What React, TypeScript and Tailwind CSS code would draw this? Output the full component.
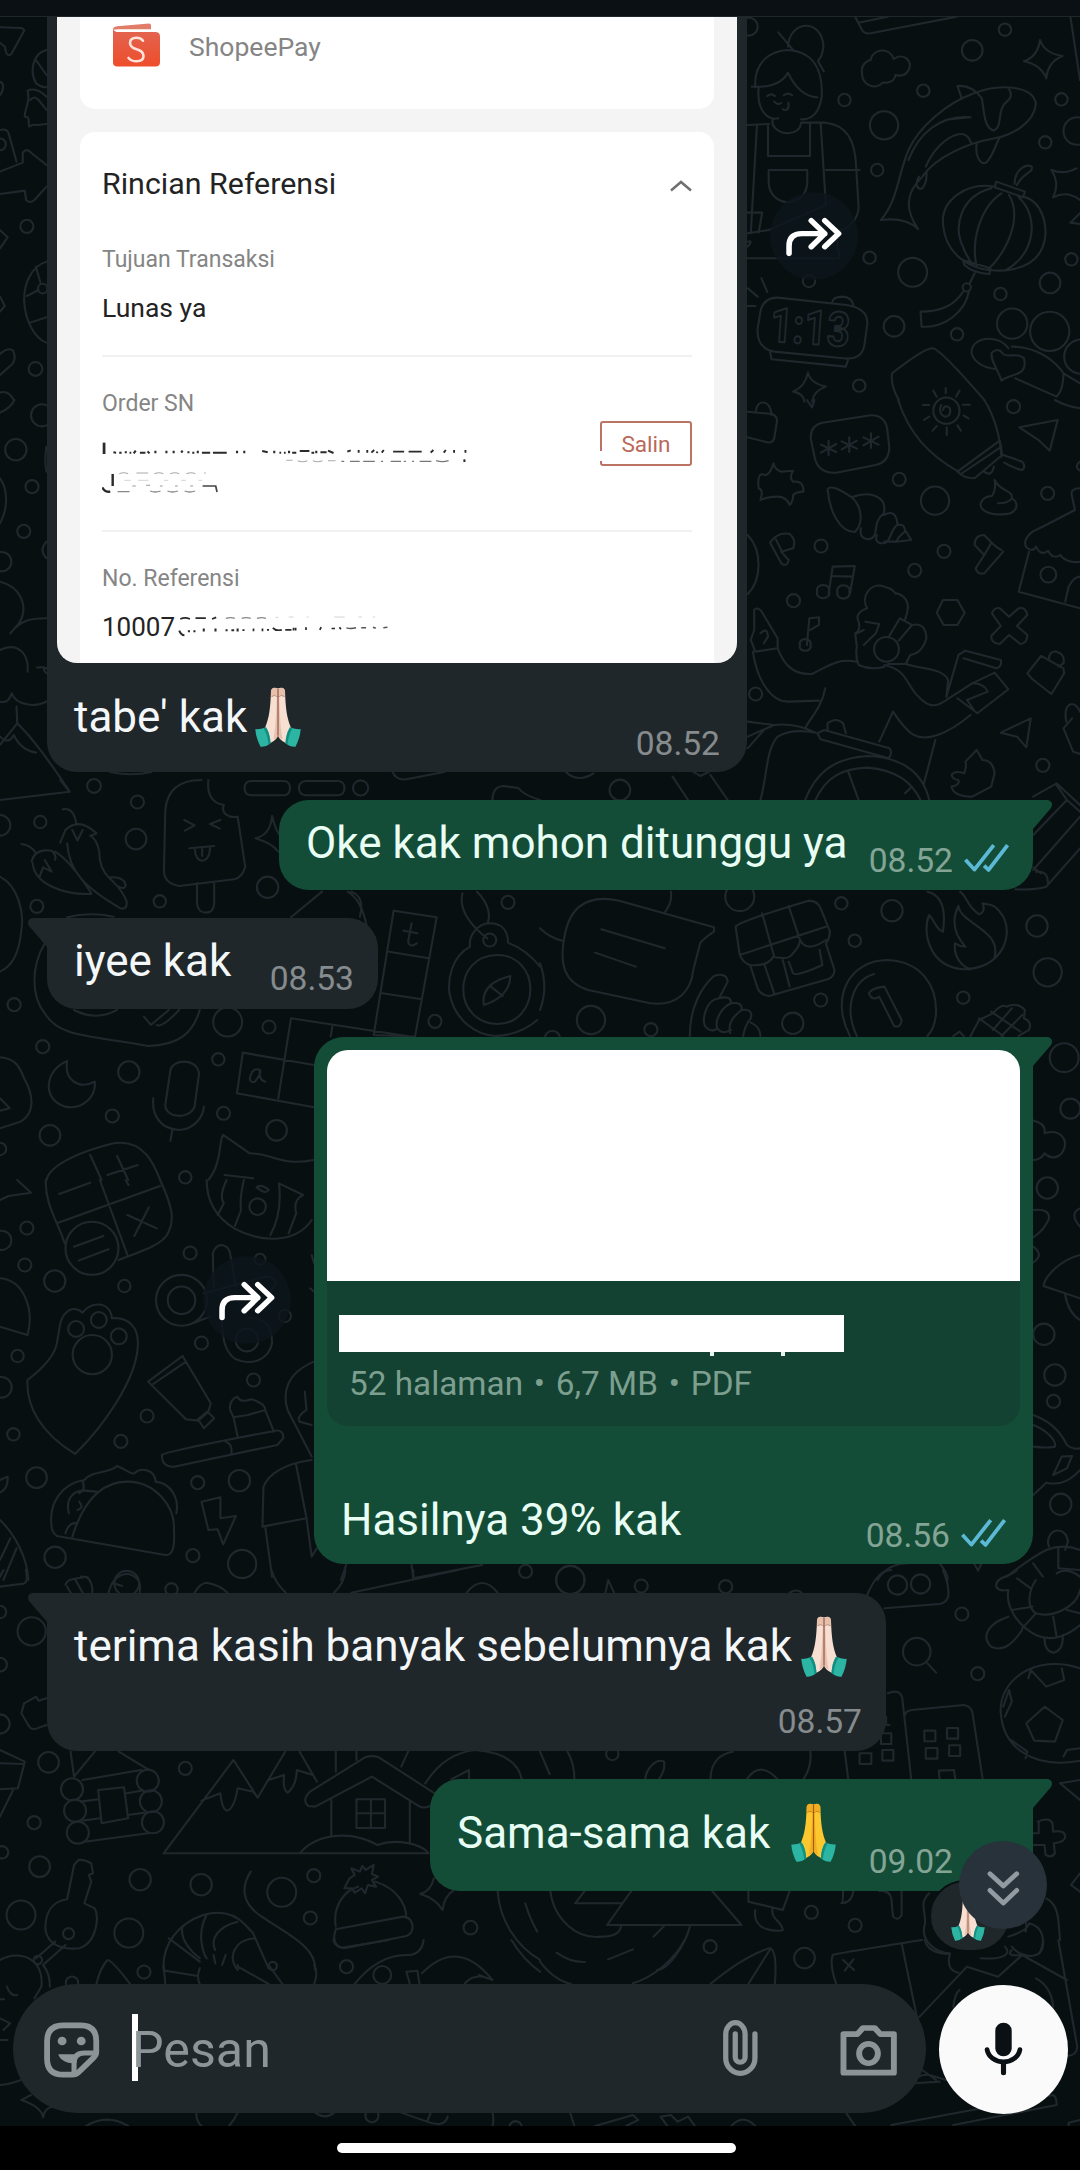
import type { ReactNode } from "react";

type Dot = [number, number, number];

interface Tile {
  x: number;
  y: number;
  dots: Dot[];
  d: string;
}

/* Each tile of the wallpaper is drawn in its own grid and scaled onto the page. */
const tiles: Tile[] = [
  {
    x: 0,
    y: 0,
    dots: [
      [78, 679, 19],
      [103, 1107, 20],
      [124, 866, 14],
      [0, 433, 17],
    ],
    d: "M0 82 L62 84 Q74 88 68 96 L34 160 Q24 172 18 158 L14 140 L0 128 M135 150 C95 160 85 215 105 250 Q120 262 135 262 M103 178 L135 225 M80 272 C90 310 70 325 72 350 C90 350 80 370 85 380 Q95 372 110 375 L135 372 M80 272 Q105 260 135 290 M88 300 Q100 285 112 300 T135 330 M0 245 Q14 250 6 275 L0 285 M0 390 Q20 385 25 400 L48 485 M0 515 L66 488 L66 458 Q78 442 92 460 L135 495 M0 582 L72 572 L76 600 Q85 612 100 600 L135 560 M0 690 L22 712 L0 745 M0 890 L14 918 L0 935 M135 785 C90 800 70 850 70 900 C72 960 100 1015 135 1028 M78 888 L112 870 M88 968 L135 952 M104 800 L118 850 M0 1062 Q25 1040 38 1052 Q48 1075 36 1092 L0 1125 M0 1178 Q24 1170 40 1200",
  },
  {
    x: 540,
    y: 0,
    dots: [
      [884, 300, 18], [1113, 272, 18], [1255, 151, 30], [1350, 89, 18], [999, 376, 41], [979, 510, 18],
      [1514, 298, 18], [1467, 427, 18], [1560, 393, 40], [957, 773, 18], [1082, 817, 42], [781, 843, 18],
      [1481, 849, 30], [1543, 778, 18], [1337, 882, 18], [1211, 1003, 18], [1028, 979, 30], [1371, 971, 44],
      [1480, 994, 57], [1572, 1070, 50], [927, 1157, 18], [1239, 862, 12], [606, 80, 26],
    ],
    d: "M720 140 C725 60 815 55 823 135 Q822 165 808 182 M692 97 L735 150 M625 262 C620 190 665 152 722 150 C790 155 822 205 818 290 C812 330 795 360 758 358 M635 262 C628 330 660 362 692 355 M615 260 C680 264 708 240 720 218 C740 262 770 290 805 292 M808 185 L824 214 M675 358 V372 C690 410 755 410 758 368 M662 375 V468 H784 V370 M664 510 H776 V550 C770 625 670 625 664 550Z M630 375 L612 700 M815 370 L830 615 L665 690 M603 375 L665 372 M760 368 H830 C890 375 915 420 918 500 L925 620 C925 660 890 690 870 690 M830 510 H928 M603 775 H870 L862 720 M603 638 H645 L635 698 M603 700 L665 690 M603 740 Q620 720 603 725 M660 288 q12 -10 22 0 M708 286 q12 -10 24 0 M680 305 q10 12 20 4 M705 328 q20 8 16 -20 M935 220 C930 190 955 180 960 180 C965 145 1015 140 1027 177 C1055 155 1085 185 1070 210 C1060 230 1040 228 1032 225 C1030 245 1010 250 995 248 C975 270 935 258 935 220Z M915 50 L935 90 Q942 102 960 100 L1210 50 M925 68 L1010 50 M1452 120 Q1465 160 1517 168 Q1475 185 1470 235 Q1455 195 1405 184 Q1445 170 1452 120Z M990 660 C1040 600 1040 520 1070 450 C1100 380 1180 310 1260 280 C1330 250 1430 255 1440 310 C1435 370 1370 405 1320 415 C1240 430 1150 470 1110 530 C1060 580 1060 630 1098 687 C1070 660 1030 655 990 660Z M1225 296 L1212 258 C1240 255 1265 270 1283 295 C1290 340 1290 385 1318 392 C1345 380 1325 330 1355 305 Q1375 290 1362 268 M1070 480 C1100 400 1160 345 1250 352 L1190 358 M1268 432 C1262 470 1280 495 1295 488 C1315 470 1320 440 1335 412 M1120 500 C1150 430 1200 400 1225 402 Q1245 405 1252 430 M1100 530 C1085 560 1100 570 1110 565 Q1125 545 1122 515 M1320 560 C1240 545 1165 600 1170 670 C1175 740 1215 780 1262 800 C1310 820 1460 830 1468 700 C1468 640 1440 595 1400 590 M1310 565 C1220 590 1200 680 1228 740 Q1240 775 1262 800 M1340 580 C1280 620 1250 720 1268 800 M1362 585 C1400 650 1360 750 1300 810 M1390 592 C1450 650 1440 760 1350 812 M1325 545 L1408 575 L1403 592 L1320 562Z M1378 552 C1378 510 1410 490 1428 500 C1432 520 1405 515 1385 555 M1228 780 L1308 805 L1305 822 Q1260 820 1232 795Z M1262 820 L1248 850 M1228 876 C1200 920 1160 935 1105 935 L1108 980 C1180 985 1235 930 1245 876 M1568 600 Q1530 570 1490 592 Q1510 550 1485 510 Q1520 525 1558 505 M1568 640 L1540 668 L1568 672 M690 893 L890 915 Q955 925 950 975 L942 1035 Q935 1082 880 1075 L680 1055 Q628 1045 632 985 L640 935 Q648 892 690 893Z M668 1055 L672 1078 L888 1100 L895 1078 M848 908 Q850 890 880 890 Q905 893 910 915 M603 865 L632 890 M643 835 L660 876 M603 918 H625 M778 1118 Q785 1150 830 1160 Q795 1172 790 1205 M778 1118 Q770 1160 735 1175 Q765 1180 768 1205 M1140 1045 Q1118 1043 1022 1120 Q1018 1160 1042 1200 M1140 1045 Q1160 1045 1290 1200 M1178 1164 V1180 M1142 1172 L1152 1190 M1218 1172 L1208 1190 M1345 1062 C1360 1075 1385 1055 1405 1075 C1420 1130 1365 1120 1340 1142 C1330 1110 1305 1075 1312 1058 Q1330 1040 1345 1062Z M1360 1045 C1330 1000 1250 1010 1253 1060 Q1265 1100 1325 1108 M1370 1040 C1450 1040 1500 1090 1520 1120 Q1520 1170 1500 1190 L1380 1135 M1520 1120 L1568 1150 M1540 50 L1568 240",
  },
  {
    x: 0,
    y: 400,
    dots: [
      [122, 46, 32], [46, 149, 31], [93, 260, 19], [69, 394, 19], [5, 485, 28], [273, 1158, 20], [1047, 1164, 22],
    ],
    d: "M0 38 Q30 25 42 0 M135 140 Q128 180 135 215 M0 235 C25 270 22 330 0 370 M135 425 Q112 450 135 475 M0 545 C60 560 85 620 55 670 L30 700 C60 660 90 655 135 655 M0 750 C50 725 85 760 80 815 M108 803 Q125 800 135 805 M135 805 Q120 805 135 820 M0 905 Q25 912 34 880 C48 918 105 922 135 905 M48 920 L50 970 L0 1035 M50 970 Q110 1030 202 1175 M0 1010 Q25 1035 40 1005 Q60 1050 105 1058 M320 1116 Q380 1130 440 1116 M728 1143 H825 Q842 1145 842 1164 Q842 1184 825 1186 H728 Q710 1184 710 1164 Q710 1145 728 1143Z M888 1143 H982 Q1000 1145 1000 1164 Q1000 1184 982 1186 H888 Q868 1184 868 1164 Q868 1145 888 1143Z M1140 1116 Q1150 1142 1180 1138 L1290 1116",
  },
  {
    x: 540,
    y: 400,
    dots: [
      [1375, 20, 19], [1043, 238, 19], [1147, 302, 41], [1474, 280, 19], [816, 438, 19], [1173, 454, 19],
      [1088, 511, 19], [736, 602, 19], [1476, 524, 23], [626, 882, 19], [1460, 1096, 19], [232, 1170, 30], [1180, 32, 38], [1006, 748, 36],
    ],
    d: "M627 32 C630 -5 672 0 672 45 M603 35 L675 42 Q690 50 688 65 L680 115 Q675 130 660 127 L603 112 M775 0 L790 22 L797 0 M820 68 L960 46 Q1000 45 1008 85 L1014 140 Q1015 185 975 195 L860 218 Q810 222 798 175 L786 115 Q785 75 820 68Z M838 122 V166 M816 134 L860 156 M860 132 L816 158 M898 112 V156 M876 124 L920 146 M920 122 L876 148 M961 100 V144 M939 112 L983 134 M983 110 L939 136 M1112 15 h18 M1115 60 L1130 50 M1140 92 L1152 78 M1181 105 V82 M1222 92 L1212 76 M1244 55 L1230 46 M1248 14 h-20 M1170 30 Q1175 10 1190 25 Q1195 50 1175 50 Q1155 40 1165 15 M1040 0 C1070 100 1130 165 1215 215 M1290 0 C1320 50 1335 100 1340 170 M1212 215 L1335 122 L1342 165 L1262 235 Q1230 235 1212 215Z M1222 222 L1340 140 M1290 215 Q1310 232 1318 200 M1345 165 L1400 185 Q1412 200 1400 210 Q1375 205 1348 188 M1392 82 L1503 60 L1480 152 L1450 122Z M1495 0 Q1530 20 1568 25 M1568 185 Q1550 200 1568 212 M678 190 Q682 210 700 215 L735 212 Q722 232 735 245 Q765 240 765 275 Q745 275 735 285 Q735 305 725 315 Q715 290 690 290 Q660 290 640 300 Q650 270 635 265 Q630 225 645 222 Q665 235 678 190Z M835 268 Q845 250 905 292 C935 320 940 370 915 395 C870 400 840 330 835 268Z M905 292 C960 270 1010 290 998 340 C960 370 990 410 955 418 Q925 415 932 385 M998 345 Q1035 325 1038 375 C1015 390 1020 430 995 430 Q970 430 978 405 M1038 375 Q1060 370 1060 395 Q1040 410 1035 425 H1000 M1060 390 L1078 420 L1035 425 M1320 240 C1335 275 1375 270 1370 295 Q1360 310 1330 310 M1370 295 C1395 310 1385 345 1340 343 C1300 345 1265 325 1285 300 Q1295 288 1312 288 Q1325 270 1320 240 M1568 265 Q1545 265 1543 280 L1553 330 Q1480 370 1430 395 Q1400 420 1412 442 Q1430 458 1440 440 Q1455 470 1475 452 Q1490 480 1510 465 Q1530 492 1568 485 M1420 455 L1390 575 L1568 625 M1525 605 L1535 560 Q1550 530 1568 530 M603 405 C645 450 645 540 603 582 M668 428 Q690 395 725 402 Q745 420 735 445 L700 455 L722 480 Q720 500 702 492 L668 428 M685 418 L705 460 M1340 450 Q1325 445 1290 405 Q1262 405 1262 435 L1290 465 L1265 505 Q1270 525 1290 520 L1345 455 M1310 430 L1290 465 M838 580 L850 500 L914 498 L900 580 M848 528 L908 530 M805 575 a18 15 0 1 0 34 0 a18 15 0 1 0 -34 0 M864 576 a18 15 0 1 0 34 0 a18 15 0 1 0 -34 0 M775 735 L782 655 L810 652 V675 L785 690 M755 735 a16 13 0 1 0 30 0 a16 13 0 1 0 -30 0 M1170 600 H1212 L1233 638 L1212 675 H1172 L1152 638Z M1312 640 Q1320 620 1335 625 L1362 650 L1390 625 Q1410 620 1415 645 L1385 678 L1415 705 Q1415 730 1395 732 L1362 705 L1335 732 Q1310 730 1310 708 L1338 678Z M950 625 C930 590 960 545 1000 560 C1040 570 1025 585 1035 580 C1070 590 1075 620 1060 658 M950 625 Q920 635 922 655 Q935 690 915 700 L920 740 Q915 770 925 795 Q960 812 1000 800 M945 665 L985 672 L975 700 L940 735 M920 700 L940 690 M1012 712 L1045 655 L1080 675 L1042 722 M1080 675 Q1120 665 1122 715 Q1110 760 1075 765 L1062 792 H1010 M622 630 Q630 620 642 632 L690 715 L690 745 L625 755 L612 720 L622 690 Z M640 700 Q660 680 662 710 L650 730 M690 745 C710 800 740 825 790 822 C850 790 870 775 920 785 M618 755 C630 840 670 905 720 905 L810 902 M828 865 C820 920 780 960 770 985 M1000 795 C1060 810 1060 840 1090 880 C1120 915 1140 930 1180 900 L1255 850 Q1290 850 1300 875 L1240 900 L1260 930 M1062 792 C1120 810 1170 805 1185 840 L1180 890 L1215 765 L1235 752 L1338 780 Q1342 800 1325 805 L1230 775 M1255 850 L1320 818 L1360 868 L1270 940 L1212 895 M1250 945 C1180 1005 1120 1025 1085 1005 Q1060 990 1025 935 L985 1025 M1148 1020 L1115 1150 M1430 838 L1415 820 L1455 768 L1520 805 L1522 820 L1485 882Z M1478 775 Q1480 752 1500 755 Q1525 762 1520 790 L1505 800 M1338 998 L1425 955 L1412 1042 L1385 1010Z M1568 1062 L1548 1055 L1520 985 L1545 955 M1528 965 Q1520 915 1545 912 Q1560 915 1568 935 M805 1000 L825 990 L1015 1045 Q1025 1060 1012 1075 L815 1018Z M835 990 V970 Q860 950 880 970 L888 1000 M603 965 L680 975 Q740 968 800 998 M603 1010 L680 975 M640 1200 C660 1130 655 1050 690 1010 Q730 985 800 998 M603 1045 L650 990 M770 1200 C800 1120 850 1075 950 1068 C1040 1070 1110 1110 1130 1200 M800 1200 C830 1130 880 1105 950 1103 C1040 1110 1080 1150 1105 1200 M895 1115 L925 1200 M1060 1180 L1075 1165 M1195 1125 Q1205 1110 1232 1120 Q1240 1095 1235 1085 L1268 1050 L1285 1080 Q1315 1080 1320 1120 L1310 1160 L1255 1190 Q1200 1190 1195 1160 Q1220 1155 1215 1140 Q1200 1140 1195 1125Z M75 1116 Q110 1150 155 1120 M385 1130 L430 1200 M495 1125 L545 1200 M445 1116 L465 1128 L490 1116",
  },
  {
    x: 0,
    y: 780,
    dots: [
      [117, 126, 18], [399, 66, 19], [395, 177, 30], [0, 136, 30], [464, 364, 18], [107, 379, 19], [777, 322, 31],
      [41, 674, 19], [124, 800, 19], [661, 726, 42], [781, 741, 19], [634, 838, 18], [374, 876, 31], [326, 1008, 19],
      [145, 1066, 30], [649, 1000, 19], [803, 1051, 30], [538, 1192, 18], [1475, 367, 19], [1263, 724, 19], [1422, 480, 19], [0, 1107, 18],
    ],
    d: "M480 90 C485 30 520 0 585 0 M605 0 C600 50 620 70 650 75 C640 100 665 115 690 110 L712 260 Q705 290 680 298 L520 318 Q475 310 476 270 L480 90 M535 120 L565 136 L537 152 M640 120 L610 132 L638 146 M550 205 L622 198 M566 205 C565 255 610 255 610 202 M587 205 V228 M572 310 V370 Q575 398 598 398 Q620 398 622 370 V306 M182 88 Q215 80 222 135 M175 188 L190 150 Q230 110 280 160 L262 168 M210 150 L225 182 L240 150 M195 190 C200 270 240 320 350 385 Q370 390 368 365 C345 300 300 300 290 240 Q290 190 265 168 M322 292 Q360 290 365 315 Q362 330 345 320 M62 192 Q90 195 105 220 M92 245 Q100 205 150 212 Q165 225 160 240 M115 290 L125 262 L150 275 L130 240 M95 250 C100 310 180 345 265 342 M160 215 C200 240 240 300 265 340 M790 108 Q800 150 812 165 M790 108 Q785 165 742 175 Q790 190 808 215 M0 290 C55 320 70 400 62 450 C55 530 30 560 0 575 M195 412 Q260 395 330 410 M130 490 C90 560 90 650 130 700 C170 770 250 765 430 798 C520 795 560 760 580 690 M215 690 Q280 725 340 690 M418 710 L438 735 L490 690 M455 735 Q470 745 520 690 M845 412 L935 335 M1010 335 Q1050 360 1065 440 M1045 410 Q1060 350 1020 335 M1143 392 L1268 412 L1205 770 L1085 765 Z M1130 515 L1245 535 M1110 640 L1225 658 M1195 430 L1185 485 Q1190 505 1210 490 M1172 452 L1212 460 M845 715 L1205 772 M845 715 L808 955 M965 740 L960 770 M705 818 L912 855 M705 818 L688 940 L912 982 M195 843 C130 870 120 960 190 980 C240 990 280 950 275 905 C230 930 185 900 195 843Z M495 870 C500 840 570 830 578 880 L565 980 C550 1020 480 1015 480 975Z M445 955 C440 1010 470 1048 520 1050 C565 1048 590 1010 592 980 M500 1050 L495 1083 M1343 340 C1330 390 1370 440 1415 475 M1385 335 C1420 370 1425 410 1415 430 M1365 500 C1360 470 1385 430 1422 430 C1460 430 1475 455 1475 488 Q1530 510 1568 560 M1365 500 C1310 530 1300 600 1305 640 C1320 720 1380 765 1440 768 Q1510 765 1560 720 M1445 525 C1375 525 1345 580 1345 628 C1345 690 1390 732 1445 732 C1505 732 1540 680 1540 628 C1540 570 1500 525 1445 525Z M1405 675 Q1395 610 1482 588 Q1480 650 1405 675Z M1425 620 L1460 648 M0 832 C50 835 60 870 70 895 C100 950 100 1000 60 1025 L0 1045 M0 955 L28 985 L0 992 M135 1200 C145 1150 250 1110 330 1090 C420 1075 450 1160 465 1200 M262 1125 L295 1200 M340 1128 L372 1200 M312 1185 L400 1155 M605 1200 C645 1150 635 1080 648 1065 L725 1120 C790 1120 820 1160 910 1140 M652 1185 L735 1195 M728 885 Q720 910 740 905 Q760 880 755 870 Q735 862 728 885 M755 870 Q750 900 770 905 M0 60 L202 35 L175 0 M1430 60 Q1430 20 1462 18 L1505 24 Q1520 45 1568 60",
  },
  {
    x: 540,
    y: 780,
    dots: [
      [580, 350, 42], [875, 370, 18], [1022, 392, 31], [914, 482, 18], [1443, 438, 31], [1474, 577, 41],
      [815, 660, 19], [734, 730, 31], [1229, 653, 18], [148, 720, 41], [322, 749, 19], [1522, 833, 42], [1540, 986, 29], [36, 775, 22],
    ],
    d: "M505 442 L230 362 C130 340 90 390 75 450 C50 560 75 610 140 630 L320 670 C400 680 440 630 445 570 L465 490 Q470 480 505 455Z M178 448 L362 505 M160 518 L278 560 M380 335 Q385 370 360 400 M0 445 Q30 475 65 482 M0 550 Q25 620 0 690 M435 768 C435 680 470 620 505 588 Q540 575 545 605 L520 655 C480 660 470 720 480 740 Q500 760 515 745 M520 655 Q555 645 555 670 C530 680 505 720 515 745 Q530 765 555 750 M555 670 Q590 665 585 690 C560 710 545 730 552 760 M585 690 Q620 685 612 715 Q595 735 590 768 M612 728 Q640 740 640 768 M568 440 Q575 425 780 362 Q805 362 815 385 L842 455 Q840 480 830 490 L855 570 Q855 590 835 598 L665 648 Q640 645 632 625 L610 555 Q590 550 580 525Z M645 400 L680 530 M722 378 L755 480 M580 525 L830 440 M610 555 Q660 560 678 530 Q720 540 730 525 Q755 500 755 480 Q775 520 830 480 M652 555 L680 640 M705 540 L725 620 M722 545 L735 580 Q745 590 820 555 L812 510 M900 768 C840 650 900 540 1010 540 C1110 545 1150 620 1150 690 Q1150 740 1125 768 M920 768 C880 680 910 600 970 582 M955 640 Q960 625 1000 620 L1050 720 Q1048 745 1028 738 L985 650 Q965 665 955 640Z M1125 335 Q1185 350 1170 455 C1150 450 1145 420 1130 405 C1110 450 1125 560 1230 568 C1340 565 1375 470 1345 410 C1320 370 1310 375 1285 370 Q1295 395 1275 403 C1240 380 1240 350 1220 335 M1215 378 C1195 420 1200 460 1235 500 Q1220 500 1205 490 C1200 530 1225 560 1250 568 M1215 378 C1220 430 1340 450 1320 530 M1250 768 L1275 720 L1315 700 Q1340 670 1355 680 Q1385 665 1408 690 L1405 715 Q1430 725 1420 750 L1390 768 M1275 715 L1345 768 M1310 695 L1395 755 M1315 750 L1370 685 M1340 768 L1400 705 M1200 768 L1218 755 L1230 768 M1432 50 L1500 10 L1568 75 M1500 15 L1530 60 L1432 165 M1530 60 L1568 95 M1432 270 L1568 110 M1568 205 L1470 320 Q1440 330 1380 328 M1440 275 Q1475 270 1475 310 M1455 280 L1432 262 M1432 1022 Q1470 1030 1465 1060 C1510 1045 1540 1080 1515 1120 Q1490 1145 1465 1120 Q1455 1140 1432 1140",
  },
  {
    x: 0,
    y: 1180,
    dots: [
      [78, 144, 19], [5, 181, 28], [72, 255, 19], [159, 303, 31], [361, 318, 18], [552, 219, 19], [527, 361, 74], [527, 361, 40],
      [267, 205, 77], [585, 489, 19], [736, 600, 19], [51, 528, 18], [4, 622, 30], [427, 708, 19], [39, 763, 18], [351, 784, 19],
      [106, 893, 30], [695, 902, 31], [574, 908, 19], [160, 1132, 31], [560, 1127, 19], [703, 1152, 41], [717, 480, 33],
      [755, 238, 16], [221, 447, 23], [287, 420, 23], [345, 469, 23], [268, 524, 57], [827, 408, 18], [748, 80, 24], [1526, 1174, 19], [368, 1210, 36],
    ],
    d: "M133 0 C130 70 165 120 188 190 M465 0 C500 80 510 120 485 165 C465 195 420 210 345 240 M165 130 L465 18 M290 0 L370 225 M172 42 L262 8 M215 200 L300 168 M228 242 L315 208 M370 105 L455 145 M432 82 L390 168 M365 0 l8 15 M0 60 L25 48 L90 38 L50 0 M600 0 C600 60 625 110 680 145 C760 190 860 190 905 120 M658 0 Q635 50 650 70 L632 105 M708 0 Q695 60 700 90 L682 138 M745 22 Q760 10 780 30 Q770 45 745 22 M810 10 Q820 100 785 165 M810 10 L880 45 Q850 60 860 100 L838 160 M0 295 C70 300 100 390 80 465 L0 440 M80 600 C130 560 160 520 165 490 L175 430 C185 390 215 375 240 398 C260 365 320 360 325 415 C370 410 405 440 400 500 C395 600 300 740 218 822 C120 760 75 680 80 600Z M620 320 L618 220 Q625 195 645 195 Q665 200 668 220 L685 320 M592 340 L770 290 Q800 290 802 310 L780 340 M640 400 C650 450 640 500 680 535 C730 560 780 540 790 490 C790 440 770 410 720 415 M560 430 L610 410 M430 605 L530 528 L612 670 L605 695 L575 722 L540 718Z M445 612 L540 545 M575 718 L602 695 L622 715 L592 745Z M668 690 Q665 660 688 650 Q700 670 730 658 Q770 670 770 690 L720 705 L678 712 L668 690 M678 712 L690 770 M770 690 L795 755 M470 825 Q475 815 800 752 Q825 750 822 775 L805 795 L505 860 Q470 862 470 825Z M655 785 Q675 790 672 820 M912 545 C830 580 820 640 835 690 L905 830 M885 635 L890 690 Q860 710 870 725 L905 735 M905 840 C830 850 780 880 765 920 L762 1040 L890 1015 M860 855 L890 1015 L905 1130 L920 1105 M770 1040 L790 1190 M905 225 L912 250 M900 325 L912 335 M150 1040 C140 970 180 910 245 900 C270 870 320 880 340 858 C370 870 380 885 390 880 C410 860 450 870 452 905 C500 910 520 960 512 1000 M210 1070 C240 970 290 905 370 905 C450 905 510 980 505 1050 Q510 1130 480 1125 L165 1068 Q150 1055 150 1040 M240 905 Q250 930 230 940 M200 1000 C190 960 210 930 245 932 L280 935 M190 1060 Q200 1025 225 1030 M230 965 Q245 985 225 990 M585 965 L640 952 L640 1015 L685 1008 L648 1093 L632 1048 L605 1050 L585 965 M0 900 L22 890 Q25 925 0 938 M0 1020 C40 1060 80 1130 82 1200 M30 1075 L0 1140 M48 1105 L10 1200 M235 1190 L255 1192 M1005 1155 L990 1200 M1195 1155 L1200 1195 L1400 1155",
  },
  {
    x: 540,
    y: 1180,
    dots: [
      [1473, 24, 31], [1463, 463, 31], [1495, 585, 31], [1491, 664, 19], [1512, 973, 31], [88, 1200, 41],
    ],
    d: "M1432 90 Q1480 85 1478 115 Q1465 150 1432 172 M1432 200 Q1465 225 1432 248 M1568 85 Q1535 100 1568 140 M1568 225 C1510 240 1465 290 1462 318 L1568 355 M1525 345 Q1535 400 1568 420 M1432 705 Q1500 730 1530 795 Q1550 810 1568 805 M1432 735 C1470 750 1500 780 1495 800 Q1470 805 1432 800 M1432 945 L1470 908 C1520 920 1550 890 1568 870 M1515 830 L1545 828 L1530 865 L1490 885Z M1478 1100 L1475 1090 C1475 1040 1530 1040 1533 1085 L1525 1110 M1355 1190 Q1430 1130 1470 1110 Q1520 1090 1568 1110 M1432 1150 L1460 1190 M1505 1105 V1165 L1568 1170 M980 1200 Q1010 1150 1070 1150 M1160 1150 Q1185 1180 1183 1200 M1260 1150 L1272 1172 L1282 1150",
  },
  {
    x: 0,
    y: 1570,
    dots: [
      [0, 126, 18], [92, 184, 41], [0, 284, 20], [0, 462, 28], [141, 577, 30], [538, 595, 19], [99, 758, 19], [6, 847, 18],
      [115, 890, 30], [407, 929, 31], [584, 944, 31], [61, 1035, 42], [374, 1089, 42], [818, 967, 42], [911, 917, 19],
      [901, 1044, 19], [1366, 1073, 20], [199, 1091, 16], [498, 58, 18],
      [209, 658, 32], [218, 722, 32], [226, 788, 32], [429, 632, 32], [438, 694, 32], [444, 757, 32],
    ],
    d: "M75 0 Q85 45 60 42 L0 50 M10 0 L0 20 M190 45 Q195 30 210 28 L250 20 Q270 35 268 68 M218 28 L240 68 M195 50 L205 68 M315 68 Q330 10 375 12 Q415 25 405 68 M330 40 L355 48 M565 68 Q580 40 600 38 Q640 45 660 68 M788 0 Q800 40 830 68 M1003 0 Q1000 40 970 68 M1020 68 L1330 0 M1200 0 V20 M1355 68 Q1400 10 1445 68 M135 385 L112 392 L105 380 L70 400 L62 430 L85 470 Q90 480 105 476 L135 465 M0 540 L72 575 L52 655 L0 658 M0 580 L68 582 M38 660 L0 740 M205 545 L215 620 L275 545 M345 545 L430 598 M240 630 L410 600 M235 695 L285 688 M368 670 L410 662 M240 752 L290 745 M372 735 L420 728 M240 816 L430 790 M285 660 L360 652 L372 745 L295 760Z M475 850 L678 570 L748 683 L828 545 M475 850 H1245 M585 692 L640 670 Q645 720 660 722 Q680 715 690 655 L735 665 L748 683 M780 630 L825 615 Q820 660 835 668 Q860 650 862 600 L908 615 M870 545 L920 635 M975 545 V605 M1035 545 V570 M1185 545 L1165 590 M900 665 L1060 562 Q1080 555 1100 562 L1262 670 M900 665 Q875 690 895 708 L915 710 L1080 620 L1215 708 Q1235 718 1255 705 M962 690 V800 M1190 695 V815 M1035 688 H1118 V774 H1035Z M1077 688 V774 M1035 730 H1118 M870 850 C920 790 1020 780 1095 825 C1150 805 1220 820 1245 850 M1235 640 Q1290 550 1380 540 Q1500 550 1515 628 M1310 628 L1362 600 V628 M228 870 L215 885 L195 988 C150 995 130 1030 132 1080 C140 1125 180 1140 230 1135 C280 1120 290 1040 275 1015 L245 1000 L265 935 L258 915 L270 910 L265 880 Q245 868 228 870Z M160 1115 L105 1165 M190 1125 L125 1185 M728 905 C700 950 700 1000 760 1040 C830 1090 920 1130 915 1200 M475 1200 C470 1120 520 1060 590 1035 C640 1020 680 1030 710 1062 L735 1090 L780 1195 M530 1068 C520 1110 560 1150 580 1165 M600 1035 C570 1090 590 1150 600 1165 M690 1055 C630 1070 610 1110 625 1140 M740 1105 C680 1110 660 1160 690 1200 M490 1105 L580 1175 M620 1155 l5 25 M655 1155 l-10 30 M975 1070 C965 1010 1000 960 1040 950 M1090 935 C1150 955 1180 1000 1180 1045 M975 1078 L1170 1040 Q1195 1040 1198 1070 Q1198 1090 1180 1098 L1000 1135 Q970 1130 970 1100Z M1015 925 L1000 955 L1022 955 L1030 968 L1050 955 L1060 970 L1068 945 L1092 950 L1080 930 L1098 920 L1080 912 L1085 885 L1062 900 L1052 888 L1045 905 L1020 895 L1030 915Z M1260 925 Q1250 965 1220 972 Q1265 985 1285 1020 Q1290 980 1315 963 M1445 963 C1450 1050 1500 1130 1568 1170 M1525 1000 Q1540 1050 1560 1085",
  },
  {
    x: 540,
    y: 1570,
    dots: [
      [88, 30, 41], [294, 48, 19], [539, 50, 19], [1038, 45, 28], [1105, 42, 28], [1225, 132, 19], [1271, 311, 19],
      [1094, 245, 40], [788, 1027, 19], [915, 1066, 19], [210, 552, 18],
    ],
    d: "M190 68 L198 30 L215 68 M725 68 Q745 55 760 68 M950 75 Q980 0 1020 0 M1170 0 Q1190 50 1185 80 Q1180 98 1160 102 L1000 115 M1125 280 L1150 308 M1385 0 C1370 20 1320 20 1325 50 Q1330 65 1360 60 M1360 60 C1350 110 1390 170 1440 195 C1490 220 1540 190 1568 165 M1440 30 C1420 60 1410 110 1440 130 C1490 145 1560 110 1568 60 M1370 120 L1430 110 M1400 175 L1440 130 M1490 140 L1500 200 M1360 140 C1300 160 1280 200 1310 230 C1350 250 1380 210 1400 180 M1465 205 Q1465 245 1492 248 Q1520 240 1518 195 M1568 130 L1530 120 M1385 25 L1425 55 M1500 10 Q1530 -10 1568 20 M1568 295 C1440 250 1330 330 1338 430 C1345 530 1430 600 1568 572 M1425 300 L1470 350 L1522 330 L1515 295 M1418 325 L1425 300 M1412 460 L1465 410 L1518 450 L1495 515 L1435 512Z M1345 410 L1362 360 L1370 395 L1350 440 M1368 510 L1415 545 L1410 565 M1520 560 L1530 540 L1568 535 M1010 370 Q1045 355 1052 385 L1078 628 M1060 435 Q1062 422 1080 420 L1230 405 Q1252 408 1256 430 L1285 625 M885 545 L895 628 M1116 482 h32 v32 h-32Z M1182 474 h32 v32 h-32Z M1120 534 h34 v32 h-34Z M1188 526 h32 v32 h-32Z M990 490 h30 v32 h-30Z M994 540 h32 v32 h-32Z M928 550 h34 v32 h-34Z M1160 625 L1158 602 L1202 600 L1206 628 M1005 440 V465 H1015 M80 545 Q100 580 100 628 M0 545 L28 612 M305 628 C310 590 340 565 360 575 Q365 600 345 628 M495 628 C495 570 530 550 560 545 M785 545 Q790 590 765 628 M600 628 Q640 570 690 628 M1568 630 L1510 640 L1568 690 M1445 755 Q1480 740 1488 760 L1490 785 Q1525 780 1525 800 Q1525 815 1492 820 L1495 850 Q1485 865 1468 855 L1465 825 L1432 825 M1432 790 L1448 790 V755 M1568 910 L1542 945 L1568 965 M102 1000 L130 963 M102 1000 H240 M265 963 L195 1065 H585 L500 963 M30 963 C40 1050 110 1110 180 1100 Q230 1100 235 1070 M360 1068 L330 1100 M435 1070 C420 1130 370 1200 340 1200 M605 963 L605 995 L705 1020 L725 963 M625 1020 C615 1090 700 1085 705 1080 C700 1050 670 1050 675 1015 M880 963 Q880 1000 875 1000 Q905 1000 910 963 M985 963 Q1015 960 1020 985 L1025 1040 Q1040 1055 1050 1035 V963 M1130 970 C1100 1000 1120 1020 1118 1060 C1100 1120 1160 1150 1190 1150 M1350 1130 C1370 1150 1350 1170 1280 1165 M1360 1100 Q1420 1080 1420 1060 C1460 1070 1470 1110 1450 1150 M1470 985 Q1500 1000 1505 1050 L1510 1110 M1385 1060 Q1420 1040 1410 1085",
  },
  {
    x: 0,
    y: 1940,
    dots: [
      [418, 96, 19], [209, 128, 18], [1006, 80, 19], [1110, 105, 26], [1080, 527, 19], [110, 60, 12], [792, 78, 12], [1497, 562, 18],
    ],
    d: "M0 60 C60 25 130 60 120 140 L100 175 M125 75 Q145 100 145 140 M20 140 Q30 170 50 165 M0 178 H12 M0 235 L30 250 L10 270 M0 300 H22 M0 435 Q60 430 90 400 M62 480 Q120 500 125 532 Q130 505 150 500 M62 480 L90 465 M280 132 Q290 85 312 60 Q325 60 378 132 M475 75 L480 132 M480 92 L575 108 M580 85 Q570 110 580 132 M690 75 Q690 85 700 85 L780 132 M780 75 L820 132 M912 75 Q925 100 912 132 M968 0 Q975 25 1000 22 L1130 0 M1230 0 Q1225 40 1190 45 Q1100 40 1030 132 M1190 132 L1180 95 L1212 92 L1218 132 M1225 100 Q1330 -10 1430 120 Q1380 95 1350 130 M1430 120 L1390 105 M1485 0 Q1520 60 1568 95 M250 558 Q310 520 372 558 M570 520 Q570 545 585 558 M690 518 Q680 540 665 558 M915 518 Q945 540 970 518 M1165 518 L1240 545 Q1290 565 1300 530 M1430 518 Q1435 540 1430 558 M1240 545 L1250 520",
  },
  {
    x: 540,
    y: 1940,
    dots: [
      [494, 20, 19], [768, 54, 30],
    ],
    d: "M48 38 Q90 68 130 66 M198 58 L270 28 M0 65 Q40 120 90 132 M420 0 C390 60 330 110 270 130 M495 132 Q590 50 665 25 Q690 25 682 132 M670 25 L605 132 M850 45 Q860 40 1110 0 M850 45 Q840 70 860 132 M1050 10 L1095 235 M880 60 L912 90 M910 58 L885 92 M1118 0 Q1125 40 1190 42 Q1180 85 1205 95 L1215 98 M1100 232 L1240 80 L1330 110 L1400 45 L1530 120 M1400 45 Q1350 50 1370 30 M1370 20 C1400 60 1470 60 1460 0 M1440 115 Q1485 140 1490 200 M1200 200 Q1205 160 1218 150 M1505 0 L1560 320 Q1560 345 1530 348 M1080 430 Q1100 400 1130 405 L1180 420 M1085 430 L1160 425 M1020 555 L1490 465 Q1500 470 1500 495 L1200 555 M88 520 L100 558 M160 558 L270 525 L285 540 L250 558 M350 530 L380 525 L400 545 L430 530 L450 558 M350 530 L370 558 M555 558 Q590 520 625 558 M890 520 L915 558 M1535 558 V548 L1568 540 M1110 390 L1150 420",
  },
];

function Wallpaper() {
  return (
    <svg
      className="absolute inset-x-0 top-[17px] h-[2109px] w-[1080px]"
      viewBox="0 17 1080 2109"
      fill="none"
      stroke="#20282d"
      strokeWidth={6.2}
      strokeLinejoin="round"
      strokeLinecap="round"
      aria-hidden="true"
    >
      {tiles.map((t, i) => (
        <g key={i} transform={`translate(${t.x} ${t.y}) scale(0.3444 0.3333)`}>
          <path d={t.d} />
          {t.dots.map(([x, y, r], j) => (
            <ellipse key={j} cx={x} cy={y} rx={r} ry={r * 1.033} />
          ))}
        </g>
      ))}
      <text
        x="770"
        y="344"
        transform="rotate(4 810 328)"
        fontFamily="Roboto"
        fontWeight="700"
        fontSize="48"
        textLength="80"
        lengthAdjust="spacingAndGlyphs"
        strokeWidth="2"
      >
        1:13
      </text>
    </svg>
  );
}

function T({ className, children }: { className: string; children: ReactNode }) {
  return <span className={`block shrink-0 whitespace-nowrap ${className}`}>{children}</span>;
}

const MSG = "h-[52px] text-[44px] leading-[52px]";
const TIME = "h-[40px] text-[33.6px] leading-[40px]";

function Hands({ tone, className }: { tone: "light" | "yellow"; className: string }) {
  const light = tone === "light";
  const base = light ? "#f7dfd1" : "#fdc72f";
  const shade = light ? "#dba58e" : "#e8981c";
  const line = light ? "#8e5a49" : "#a65a0a";
  return (
    <svg className={`shrink-0 ${className}`} viewBox="0 0 46 62" preserveAspectRatio="none" aria-hidden="true">
      <path d="M23 1.500 Q17 -1 16 4 C15.500 22 14 33 10 42 L15 58 Q23 54 23 49Z" fill={base} />
      <path d="M23 1.500 Q29 -1 30 4 C30.500 22 32 33 36 42 L31 58 Q23 54 23 49Z" fill={base} />
      <path d="M16 4 Q17 -0.500 23 1.500 Q29 -0.500 30 4 V10 Q23 7 16 10Z" fill={shade} opacity="0.55" />
      <path d="M22 8 C21 28 21 40 18.500 54 Q23 53 23 49 Q23 53 27.500 54 C25 40 25 28 24 8Z" fill={shade} opacity="0.5" />
      <path d="M23 2 V50" stroke={line} strokeWidth="1.200" />
      <path d="M16.500 10 Q19.500 7.500 22.500 10 M23.500 10 Q26.500 7.500 29.500 10" stroke={line} strokeWidth="0.800" fill="none" opacity="0.7" />
      <path d="M0.300 43.500 Q5 44 11 41.500 Q15 48 15.500 58 Q11 62 5.500 61.700 Q1 53 0.300 43.500Z" fill="#2bb5a2" />
      <path d="M45.700 43.500 Q41 44 35 41.500 Q31 48 30.500 58 Q35 62 40.500 61.700 Q45 53 45.700 43.500Z" fill="#2bb5a2" />
      <path d="M11 41.500 Q15 48 15.500 58 L13.500 59.500 Q12.500 49 8.500 42.500Z M35 41.500 Q31 48 30.500 58 L32.500 59.500 Q33.500 49 37.500 42.500Z" fill="#128f82" />
    </svg>
  );
}

function Ticks({ className }: { className: string }) {
  return (
    <svg className={`h-[31px] w-[47px] shrink-0 ${className}`} viewBox="1230 190 136 92" fill="none" stroke="#5bb9d6" strokeWidth="11" preserveAspectRatio="none" aria-hidden="true">
      <path d="M1237 240 L1263 269 L1319 196 M1291 257 L1304 270 L1359 196" strokeLinejoin="round" />
    </svg>
  );
}

function Tail({ side }: { side: "in" | "out" }) {
  return side === "out" ? (
    <svg className="absolute top-0 left-full h-[30px] w-[20px]" viewBox="0 0 20 30" fill="#144d37" aria-hidden="true">
      <path d="M-1 0 H15 Q21 2 18 8 L0 29 V30 H-1Z" />
    </svg>
  ) : (
    <svg className="absolute top-0 right-full h-[30px] w-[20px]" viewBox="0 0 20 30" fill="#20272a" aria-hidden="true">
      <path d="M21 0 H5 Q-1 2 2 8 L20 29 V30 H21Z" />
    </svg>
  );
}

function Forward({ className }: { className: string }) {
  return (
    <button className={`size-[88px] shrink-0 rounded-full bg-[#0d151b]/80 ${className}`} aria-label="Teruskan">
      <svg className="size-full" viewBox="668 576 254 262" preserveAspectRatio="none" fill="none" stroke="#fff" strokeWidth="16" strokeLinecap="round" strokeLinejoin="round">
        <path d="M723 759 V737 Q723 700 760 700 H826 M787 661 L826 700 L787 739 M826 661 L866 700 L826 739" />
      </svg>
    </button>
  );
}

/* Remnants of the order number left between two erased areas. */
function OrderRemnants() {
  return (
    <svg className="mt-[21px] h-[57px] w-[370px]" viewBox="300 120 1074 171" preserveAspectRatio="none" fill="none" stroke="#2a2a2a" aria-hidden="true">
      <path d="M306 128 V162" strokeWidth="8" />
      <path d="M333 157 l8 1 M350 158 h7 M366 157 h6 M380 158 h5 M398 152 l-6 8 M410 158 h16 M432 154 l6 6 M455 152 v8 M487 152 v8 M508 152 v8 M530 158 l4 -6 M548 157 h6 M562 158 h6 M578 152 v8 M590 158 h24 M622 158 h40" strokeWidth="6" />
      <path d="M692 152 v8 M713 152 v8" strokeWidth="6" />
      <path d="M765 153 l16 4 M800 152 v8 M815 158 h5 M828 158 h5 M843 152 v8 M852 158 h12 M874 153 h28 M908 158 h8 M922 152 v8 M934 157 h18 M956 152 l16 7" strokeWidth="6" />
      <path d="M1012 155 l10 -4 M1045 150 v8 M1070 150 v8 M1082 158 l8 -8 M1100 155 l-3 4 M1118 150 l-6 8 M1145 155 h32 M1190 155 h38 M1262 150 l-8 8 M1292 158 l6 -8 M1322 150 v8 M1355 150 v8" strokeWidth="5.500" />
      <path d="M835 181 h18 M868 182 q14 6 28 0 M912 182 q14 6 28 0 M956 182 h22" strokeWidth="3" stroke="#aaa" />
      <path d="M995 184 h8 M1020 184 h28 M1058 184 h34 M1110 184 h6 M1138 184 h30 M1176 184 h6 M1200 184 h6 M1222 184 h34 M1270 182 q18 6 36 0" strokeWidth="4" stroke="#777" />
      <path d="M1352 178 v8" strokeWidth="6" />
      <path d="M331 222 V258 M301 262 Q307 277 324 275" strokeWidth="7" />
      <path d="M350 221 q14 -5 26 0 M400 219 h34 M452 221 q14 -5 26 0 M498 221 q14 -5 26 0 M545 221 q14 -5 26 0 M596 219 h5" strokeWidth="3" stroke="#aaa" />
      <path d="M365 241 h18 M405 241 h30 M480 241 h12 M530 241 h14 M580 241 h10" strokeWidth="2.500" stroke="#ccc" />
      <path d="M388 258 h10 M428 256 h12 M468 258 h8 M512 258 h8 M556 258 h8" strokeWidth="3" stroke="#999" />
      <path d="M345 275 H380 M440 273 q14 6 30 0 M490 273 q14 6 30 0 M540 273 q14 6 30 0" strokeWidth="4" stroke="#888" />
      <path d="M592 258 H630 L634 276" strokeWidth="5" stroke="#444" />
    </svg>
  );
}

function ReferenceRemnants() {
  return (
    <svg className="mt-[3px] -ml-[3px] h-[27px] w-[221px]" viewBox="500 640 640 80" preserveAspectRatio="none" fill="none" stroke="#2a2a2a" aria-hidden="true">
      <path d="M524 658 Q538 651 552 658 M568 655 H598 M616 658 L628 653" strokeWidth="5" />
      <path d="M656 656 q14 -5 26 0 M702 656 q14 -5 26 0 M746 656 q14 -5 26 0" strokeWidth="4" stroke="#888" />
      <path d="M800 653 h8 M838 652 h14 M890 652 h6 M970 652 h30 M1040 652 h10 M1082 652 h6" strokeWidth="2.500" stroke="#ccc" />
      <path d="M521 692 Q526 705 536 706" strokeWidth="6" />
      <path d="M546 694 h6 M562 694 h6 M592 686 v9 M626 686 v9 M655 691 h6 M672 691 h8 M690 686 v9" strokeWidth="6" />
      <path d="M704 691 h6 M736 686 v8 M762 686 v8 M775 690 h6 M792 684 q8 10 26 6 M828 690 h18 M852 684 v8 M858 684 v8" strokeWidth="5" />
      <path d="M888 682 v8 M932 682 l-4 8 M962 686 h10 M985 682 l4 6" strokeWidth="5" />
      <path d="M1005 684 q12 4 28 0 M1048 684 H1062 M1082 682 l8 3 M1112 684 l12 -2" strokeWidth="4.500" stroke="#555" />
    </svg>
  );
}

function Receipt() {
  return (
    <div className="flex h-[646px] w-[680px] flex-col overflow-hidden rounded-b-[20px] bg-[#f4f4f4] px-[23px]">
      <div className="flex h-[92px] shrink-0 items-start rounded-b-[15px] bg-white pl-[31px]">
        <svg className="mt-[5px] h-[46px] w-[50px]" viewBox="0 0 50 48" preserveAspectRatio="none" aria-hidden="true">
          <defs>
            <linearGradient id="wallet" x1="0" y1="0" x2="0" y2="1">
              <stop offset="0" stopColor="#e26552" />
              <stop offset="1" stopColor="#ee4d2b" />
            </linearGradient>
          </defs>
          <path d="M2 8 Q2 5 6 4.500 L38 1.500 Q40 1.500 40 4 V7.500 H8Z" fill="#e17c68" />
          <path d="M2 7 Q3 10.500 8 10.500 H44 Q49 10.500 49 15 V42 Q49 46.500 44.500 46.500 H6.500 Q2 46.500 2 42Z" fill="url(#wallet)" />
          <path d="M32 19.500 Q29.500 16.500 25.500 16.500 Q19 16.500 19 22 Q19 26.500 25.500 28.500 Q32.500 30.500 32.500 35.500 Q32.500 41 25.500 41 Q20.500 41 17.500 37.500" fill="none" stroke="#ffe3da" strokeWidth="2.600" strokeLinecap="round" />
        </svg>
        <T className="mt-[12px] ml-[28px] h-[36px] text-[26.5px] leading-[36px] text-[#858585]">ShopeePay</T>
      </div>
      <div className="mt-[23px] flex h-[540px] shrink-0 flex-col rounded-t-[15px] bg-white px-[22px]">
        <div className="mt-[32px] flex h-[40px] shrink-0 items-center justify-between">
          <T className="h-[40px] text-[30.4px] leading-[40px] text-[#232323]">Rincian Referensi</T>
          <svg className="mt-[4px] h-[12px] w-[22px]" viewBox="0 0 22 12" fill="none" stroke="#707070" strokeWidth="2.500" aria-hidden="true">
            <path d="M1 10.500 L11 2 L21 10.500" />
          </svg>
        </div>
        <T className="mt-[41px] h-[30px] text-[23px] leading-[30px] text-[#858585]">Tujuan Transaksi</T>
        <T className="mt-[16px] h-[34px] text-[26.5px] leading-[34px] text-[#232323]">Lunas ya</T>
        <div className="mt-[30px] h-[2px] shrink-0 bg-[#f1f1f1]" />
        <T className="mt-[32px] h-[30px] text-[23px] leading-[30px] text-[#858585]">Order SN</T>
        <div className="flex h-[111px] shrink-0 justify-between">
          <OrderRemnants />
          <div className="relative mt-[2px] h-[45px] w-[92px] rounded-[3px] border-2 border-[#bb7464] text-center">
            <T className="h-[41px] text-[22.6px] leading-[44px] text-[#b9695a]">Salin</T>
            <div className="absolute top-[28px] -left-[3px] h-[10px] w-[4px] bg-white" />
          </div>
        </div>
        <div className="h-[2px] shrink-0 bg-[#f1f1f1]" />
        <T className="mt-[32px] h-[30px] text-[23px] leading-[30px] text-[#858585]">No. Referensi</T>
        <div className="mt-[16px] flex h-[34px] shrink-0">
          <T className="h-[34px] text-[26px] leading-[34px] text-[#232323]">10007</T>
          <ReferenceRemnants />
        </div>
      </div>
    </div>
  );
}

export default function App() {
  return (
    <div className="relative flex h-[2170px] w-[1080px] flex-col overflow-hidden bg-[#070f10] font-['Roboto',sans-serif]">
      <Wallpaper />
      <div className="relative h-[17px] shrink-0 border-b border-[#20262a] bg-[#0a1014]" />

      <main className="relative flex h-[1967px] shrink-0 flex-col">
        <div className="flex items-start pl-[47px]">
          <div className="h-[755px] w-[700px] rounded-b-[30px] bg-[#20272a] pl-[10px]">
            <Receipt />
            <div className="flex">
              <T className={`mt-[28px] ml-[17px] text-[#f4f7f9] ${MSG}`}>tabe' kak</T>
              <Hands tone="light" className="mt-[24px] ml-[8px] h-[60px] w-[46px]" />
              <T className={`mt-[61px] mr-[27px] ml-auto text-[#868b8e] ${TIME}`}>08.52</T>
            </div>
          </div>
          <Forward className="mt-[175px] ml-[23px]" />
        </div>

        <div className="mt-[28px] flex justify-end pr-[47px]">
          <div className="relative flex h-[90px] w-[754px] rounded-[30px] rounded-tr-none bg-[#144d37]">
            <Tail side="out" />
            <T className={`mt-[17px] ml-[27px] text-[#e8fef5] ${MSG}`}>Oke kak mohon ditunggu ya</T>
            <T className={`mt-[41px] ml-auto text-[#84a596] ${TIME}`}>08.52</T>
            <Ticks className="mt-[43px] mr-[23px] ml-[10px]" />
          </div>
        </div>

        <div className="mt-[28px] flex pl-[47px]">
          <div className="relative flex h-[91px] w-[331px] rounded-[30px] rounded-tl-none bg-[#20272a]">
            <Tail side="in" />
            <T className={`mt-[17px] ml-[27px] text-[#f4f7f9] ${MSG}`}>iyee kak</T>
            <T className={`mt-[41px] mr-[24px] ml-auto text-[#868b8e] ${TIME}`}>08.53</T>
          </div>
        </div>

        <div className="mt-[28px] flex items-start justify-end pr-[47px]">
          <Forward className="mt-[219px] mr-[23px]" />
          <div className="relative h-[527px] w-[719px] rounded-[30px] rounded-tr-none bg-[#144d37] px-[13px] pt-[13px]">
            <Tail side="out" />
            <div className="h-[376px] overflow-hidden rounded-[21px] bg-[#144232]">
              <div className="h-[231px] bg-white" />
              <div className="relative mt-[34px] ml-[12px] h-[37px] w-[505px] bg-white">
                <div className="absolute top-full left-[371px] h-[4px] w-[4px] bg-[#e9f3ee]" />
                <div className="absolute top-full left-[442px] h-[4px] w-[4px] bg-[#e9f3ee]" />
              </div>
              <T className="mt-[12px] ml-[22px] h-[40px] text-[33.3px] leading-[40px] text-[#7d9f90]">
                52 halaman <span className="mx-[2.500px]">•</span> 6,7 MB <span className="mx-[2.500px]">•</span> PDF
              </T>
            </div>
            <div className="flex">
              <T className={`mt-[68px] ml-[14px] text-[#e8fef5] ${MSG}`}>Hasilnya 39% kak</T>
              <T className={`mt-[90px] ml-auto text-[#84a596] ${TIME}`}>08.56</T>
              <Ticks className="mt-[92px] mr-[13px] ml-[10px]" />
            </div>
          </div>
        </div>

        <div className="mt-[29px] flex pl-[47px]">
          <div className="relative h-[158px] w-[839px] rounded-[30px] rounded-tl-none bg-[#20272a]">
            <Tail side="in" />
            <div className="flex h-[109px]">
              <T className={`mt-[27px] ml-[27px] text-[#f4f7f9] ${MSG}`}>terima kasih banyak sebelumnya kak</T>
              <Hands tone="light" className="mt-[23px] ml-[9px] h-[61px] w-[46px]" />
            </div>
            <T className={`mr-[24px] text-right text-[#868b8e] ${TIME}`}>08.57</T>
          </div>
        </div>

        <div className="mt-[28px] flex justify-end pr-[47px]">
          <div className="relative flex h-[112px] w-[603px] rounded-[30px] rounded-tr-none bg-[#144d37]">
            <Tail side="out" />
            <T className={`mt-[28px] ml-[27px] text-[#e8fef5] ${MSG}`}>Sama-sama kak</T>
            <Hands tone="yellow" className="mt-[24px] ml-[21px] h-[59px] w-[45px]" />
            <T className={`mt-[63px] mr-[80px] ml-auto text-[#84a596] ${TIME}`}>09.02</T>
            <div className="absolute top-[101px] left-[499px] flex h-[72px] w-[82px] items-center justify-center rounded-[36px] border-2 border-[#070f10] bg-[#20272a]">
              <Hands tone="light" className="mt-[4px] mr-[4px] h-[46px] w-[34px]" />
            </div>
          </div>
        </div>

        <button className="absolute top-[1824px] left-[959px] size-[88px] rounded-full bg-[#28323a]" aria-label="Ke bawah">
          <svg className="size-full" viewBox="1216 812 256 266" preserveAspectRatio="none" fill="none" stroke="#929ba1" strokeWidth="14" strokeLinecap="round" strokeLinejoin="round">
            <path d="M1306 911 L1345 948 L1384 911 M1306 961 L1345 1000 L1384 961" />
          </svg>
        </button>
      </main>

      <footer className="relative flex h-[142px] shrink-0 items-start pl-[13px]">
        <div className="flex h-[129px] w-[913px] items-start rounded-[65px] bg-[#20272a] pl-[31px] text-[#8c9497]">
          <svg className="mt-[38px] h-[56px] w-[56px] shrink-0" viewBox="128 245 164 168" preserveAspectRatio="none" fill="none" stroke="currentColor" aria-hidden="true">
            <path strokeWidth="17" d="M185 255 H235 Q281 255 281 302 V336 Q281 344 273 352 L230 395 Q222 403 210 403 H185 Q137 403 137 355 V303 Q137 255 185 255Z" />
            <path strokeWidth="15" d="M216 398 V368 Q216 338 246 338 H276" />
            <path fill="currentColor" stroke="none" d="M170 342 H224 V367 Q204 372 188 363 Q173 355 170 342Z" />
            <ellipse cx="181" cy="302" rx="13" ry="13" fill="currentColor" stroke="none" />
            <ellipse cx="237" cy="302" rx="13" ry="13" fill="currentColor" stroke="none" />
          </svg>
          <div className="mt-[30px] ml-[32px] h-[67px] w-[6px] bg-white" />
          <T className="mt-[36px] -ml-[6px] h-[60px] text-[50.2px] leading-[60px]">Pesan</T>
          <svg className="mt-[36px] mr-[82px] ml-auto h-[57px] w-[36px]" viewBox="528 240 106 170" preserveAspectRatio="none" fill="none" stroke="currentColor" strokeWidth="15.500" strokeLinecap="round" aria-hidden="true">
            <path d="M625 281 V353 A43 46 0 0 1 539 353 V283 A28.500 35 0 0 1 596 283 V350 A14.500 16 0 0 1 567 350 V281" />
          </svg>
          <svg className="mt-[41px] mr-[29px] h-[51px] w-[57px]" viewBox="870 254 164 152" preserveAspectRatio="none" fill="none" stroke="currentColor" strokeWidth="17" strokeLinejoin="round" aria-hidden="true">
            <path d="M880 281 H920 L936 263 H970 L986 281 H1025 V396 H880Z" />
            <ellipse cx="952" cy="339" rx="27" ry="29" />
          </svg>
        </div>
        <button className="mt-[1px] ml-[13px] flex size-[129px] items-center justify-center rounded-full bg-[#fafafa]" aria-label="Rekam">
          <svg className="-mt-[1px] h-[54px] w-[39px]" viewBox="1290 245 114 162" preserveAspectRatio="none" fill="none" stroke="#0a1014" strokeLinecap="round" aria-hidden="true">
            <rect x="1323" y="247" width="48" height="101" rx="24" fill="#0a1014" stroke="none" />
            <path strokeWidth="14" d="M1299 328 A48.500 43 0 0 0 1395 328" />
            <path strokeWidth="15" d="M1347 372 V397" />
          </svg>
        </button>
      </footer>

      <div className="relative flex h-[44px] shrink-0 justify-center bg-black pt-[17px]">
        <div className="mr-[7px] h-[10px] w-[399px] rounded-full bg-white" />
      </div>
    </div>
  );
}
